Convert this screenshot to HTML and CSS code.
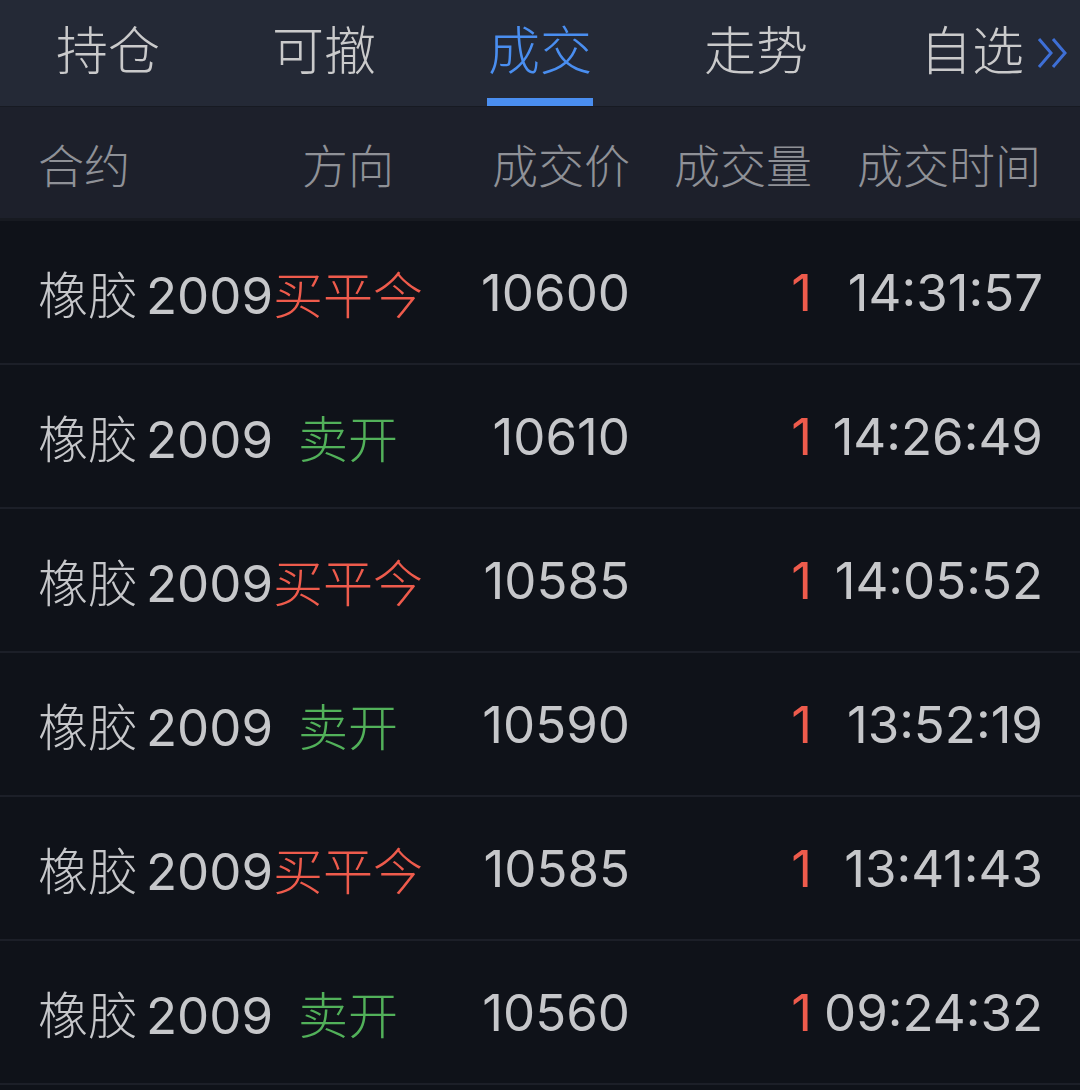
FILE: index.html
```html
<!DOCTYPE html>
<html lang="zh-CN">
<head>
  <meta charset="UTF-8">
  <title>成交</title>
  <link rel="stylesheet" href="styles.css">
</head>
<body>
  <div id="app">
    <div class="tabs">
      <div class="tab">持仓</div>
      <div class="tab">可撤</div>
      <div class="tab active">成交</div>
      <div class="tab">走势</div>
      <div class="tab">自选
        <svg class="more" width="34" height="32" viewBox="0 0 34 32">
          <path d="M3 2 L15 16 L3 30 M17 2 L29 16 L17 30" fill="none" stroke="#3e6fd6" stroke-width="3"/>
        </svg>
      </div>
    </div>

    <div class="head row">
      <div class="c-name">合约</div>
      <div class="c-dir">方向</div>
      <div class="c-price">成交价</div>
      <div class="c-vol">成交量</div>
      <div class="c-time">成交时间</div>
    </div>

    <div class="list">
      <div class="row">
        <div class="c-name">橡胶<span class="num">2009</span></div>
        <div class="c-dir up">买平今</div>
        <div class="c-price num">10600</div>
        <div class="c-vol num up">1</div>
        <div class="c-time num">14:31:57</div>
      </div>
      <div class="row">
        <div class="c-name">橡胶<span class="num">2009</span></div>
        <div class="c-dir down">卖开</div>
        <div class="c-price num">10610</div>
        <div class="c-vol num up">1</div>
        <div class="c-time num">14:26:49</div>
      </div>
      <div class="row">
        <div class="c-name">橡胶<span class="num">2009</span></div>
        <div class="c-dir up">买平今</div>
        <div class="c-price num">10585</div>
        <div class="c-vol num up">1</div>
        <div class="c-time num">14:05:52</div>
      </div>
      <div class="row">
        <div class="c-name">橡胶<span class="num">2009</span></div>
        <div class="c-dir down">卖开</div>
        <div class="c-price num">10590</div>
        <div class="c-vol num up">1</div>
        <div class="c-time num">13:52:19</div>
      </div>
      <div class="row">
        <div class="c-name">橡胶<span class="num">2009</span></div>
        <div class="c-dir up">买平今</div>
        <div class="c-price num">10585</div>
        <div class="c-vol num up">1</div>
        <div class="c-time num">13:41:43</div>
      </div>
      <div class="row">
        <div class="c-name">橡胶<span class="num">2009</span></div>
        <div class="c-dir down">卖开</div>
        <div class="c-price num">10560</div>
        <div class="c-vol num up">1</div>
        <div class="c-time num">09:24:32</div>
      </div>
    </div>
  </div>
</body>
</html>
```

FILE: styles.css
```css
* { margin: 0; padding: 0; box-sizing: border-box; }
body {
  background-color: #0f1219;
  font-family: "Noto Sans CJK SC", sans-serif;
  font-weight: 300;
  color: #c6c7ca;
  overflow: hidden;
}
#app {
  width: 1080px;
  height: 1090px;
}
.tabs {
  height: 107px;
  background: #242936;
  display: grid;
  grid-template-columns: repeat(5, 216px);
  border-bottom: 1px solid #171a22;
}
.tab {
  position: relative;
  display: flex;
  justify-content: center;
  align-items: center;
  padding-bottom: 12px;
  font-size: 52px;
  color: #cacacb;
}
.tab.active {
  color: #4a8ef0;
}
.tab.active::after {
  content: "";
  position: absolute;
  left: 55px;
  right: 55px;
  bottom: 0;
  height: 8px;
  background: #4a8ef0;
}
.tab .more {
  position: absolute;
  right: 10px;
  top: 37px;
}
.row {
  height: 144px;
  display: grid;
  grid-template-columns: 235px 150px 207px 182px 1fr;
  align-items: center;
  padding: 0 37px 0 38px;
  border-bottom: 2px solid #1c1f28;
  font-size: 50px;
  white-space: nowrap;
}
.head.row {
  height: 114px;
  background: #1d202b;
  border-bottom: 3px solid #171a21;
  color: #8f9197;
  font-size: 46px;
  padding-right: 39px;
}
.num {
  font-family: "Inter", "Noto Sans CJK SC", sans-serif;
  font-weight: 400;
  font-size: 51px;
}
.c-name .num { margin-left: 8px; }
.c-dir { text-align: center; }
.c-price, .c-vol, .c-time { text-align: right; }
.up { color: #ee5b4c; }
.down { color: #52b15a; }
```
